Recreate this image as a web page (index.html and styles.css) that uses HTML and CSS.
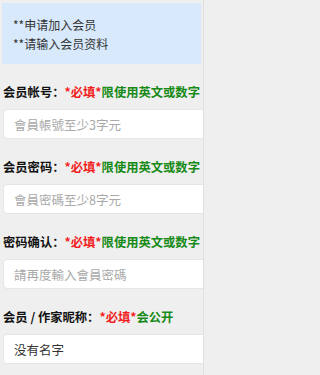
FILE: index.html
```html
<!DOCTYPE html>
<html lang="zh">
<head>
<meta charset="utf-8">
<meta name="viewport" content="width=device-width, initial-scale=1">
<title>申请加入会员</title>
<link rel="stylesheet" href="styles.css">
</head>
<body>
<div class="page">
  <div class="notice">
    <p>**申请加入会员</p>
    <p>**请输入会员资料</p>
  </div>
  <form class="form">
    <div class="field">
      <label class="label">会员帐号：<span class="req">*必填*</span><span class="hint">限使用英文或数字</span></label>
      <input class="input" type="text" placeholder="會員帳號至少3字元">
    </div>
    <div class="field">
      <label class="label">会员密码：<span class="req">*必填*</span><span class="hint">限使用英文或数字</span></label>
      <input class="input" type="password" placeholder="會員密碼至少8字元">
    </div>
    <div class="field">
      <label class="label">密码确认：<span class="req">*必填*</span><span class="hint">限使用英文或数字</span></label>
      <input class="input" type="password" placeholder="請再度輸入會員密碼">
    </div>
    <div class="field">
      <label class="label">会员 / 作家昵称：<span class="req">*必填*</span><span class="hint">会公开</span></label>
      <input class="input" type="text" value="没有名字">
    </div>
  </form>
</div>
</body>
</html>
```
FILE: styles.css
```css
html, body {
  margin: 0;
  padding: 0;
  background: #efefef;
}
body {
  font-family: "Noto Sans CJK SC", "Noto Sans", sans-serif;
  font-size: 12px;
  color: #333;
  overflow: hidden;
}
.page {
  width: 204px;
  height: 375px;
  overflow: hidden;
  border-right: 1px solid #e0e0e0;
  box-sizing: border-box;
  padding-top: 3px;
}
.notice {
  margin: 0 2px;
  background: #d7e9fb;
  padding: 12px 11px 11px;
}
.notice p {
  margin: 0;
  line-height: 19px;
  color: #333;
  white-space: nowrap;
}
.form {
  margin: 0;
  padding: 0;
}
.field {
  margin-top: 19px;
}
.label {
  display: block;
  margin: 0 0 8px 3px;
  line-height: 18px;
  font-family: "Noto Sans CJK TC", "Noto Sans CJK SC", sans-serif;
  font-size: 12.3px;
  font-weight: bold;
  color: #111;
  white-space: nowrap;
}
.req {
  color: #f21d1d;
}
.hint {
  color: #178a17;
}
.input {
  display: block;
  box-sizing: border-box;
  margin-left: 3px;
  width: 220px;
  height: 30px;
  padding: 0 10px;
  border: 1px solid #e6e6e6;
  border-radius: 4px;
  background: #fff;
  font-family: "Noto Sans CJK TC", "Noto Sans CJK SC", sans-serif;
  font-size: 12.5px;
  color: #333;
  outline: none;
}
.input::placeholder {
  color: #a9a9a9;
}
```
